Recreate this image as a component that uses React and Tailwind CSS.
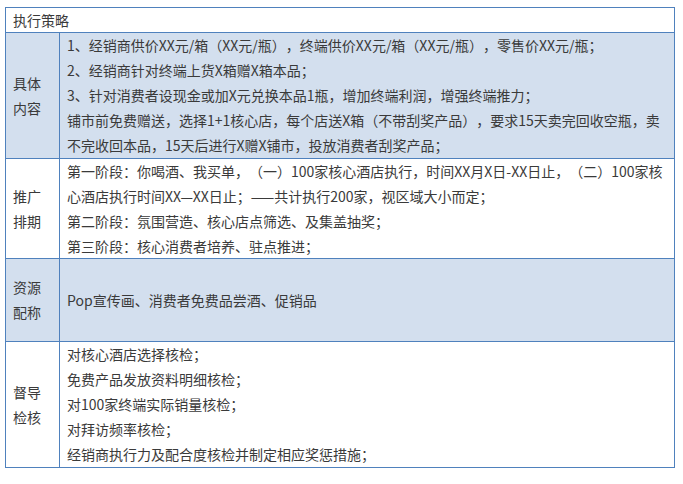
import React from 'react';

const rows = [
  {
    label: ['具体', '内容'],
    fill: true,
    h: 'h-[126px]',
    lines: [
      '1、经销商供价XX元/箱（XX元/瓶），终端供价XX元/箱（XX元/瓶），零售价XX元/瓶；',
      '2、经销商针对终端上货X箱赠X箱本品；',
      '3、针对消费者设现金或加X元兑换本品1瓶，增加终端利润，增强终端推力；',
      '铺市前免费赠送，选择1+1核心店，每个店送X箱（不带刮奖产品），要求15天卖完回收空瓶，卖',
      '不完收回本品，15天后进行X赠X铺市，投放消费者刮奖产品；',
    ],
  },
  {
    label: ['推广', '排期'],
    fill: false,
    h: 'h-[100px]',
    lines: [
      '第一阶段：你喝酒、我买单，（一）100家核心酒店执行，时间XX月X日-XX日止，（二）100家核',
      '心酒店执行时间XX—XX日止；——共计执行200家，视区域大小而定；',
      '第二阶段：氛围营造、核心店点筛选、及集盖抽奖；',
      '第三阶段：核心消费者培养、驻点推进；',
    ],
  },
  {
    label: ['资源', '配称'],
    fill: true,
    h: 'h-[83px]',
    lines: ['Pop宣传画、消费者免费品尝酒、促销品'],
  },
  {
    label: ['督导', '检核'],
    fill: false,
    h: 'h-[125px]',
    lines: [
      '对核心酒店选择核检；',
      '免费产品发放资料明细核检；',
      '对100家终端实际销量核检；',
      '对拜访频率核检；',
      '经销商执行力及配合度核检并制定相应奖惩措施；',
    ],
  },
];

export default function App() {
  return (
    <div
      className="w-[683px] h-[484px] bg-white pt-[7px] pl-[5px] text-[14px] leading-[25px] text-[#3a3a3a] [text-spacing-trim:space-all]"
      style={{ fontFamily: '"Microsoft YaHei", "Noto Sans CJK SC", sans-serif' }}
    >
      <div className="w-[670px] border border-[#4f81bd]">
        {/* 表头 */}
        <div className="h-[25px] border-b border-[#4f81bd] px-[7px] flex items-center">
          执行策略
        </div>

        {rows.map((row, i) => (
          <div
            key={i}
            className={`flex ${row.h} ${i < rows.length - 1 ? 'border-b border-[#4f81bd]' : ''} ${row.fill ? 'bg-[#d3dfee]' : 'bg-white'}`}
          >
            <div className="w-[54px] shrink-0 border-r border-[#4f81bd] pl-[7px] flex flex-col justify-center">
              {row.label.map((t) => (
                <div key={t}>{t}</div>
              ))}
            </div>
            <div className="flex-1 pl-[7px] flex flex-col justify-center">
              {row.lines.map((t, j) => (
                <div key={j} className="whitespace-nowrap">
                  {t}
                </div>
              ))}
            </div>
          </div>
        ))}
      </div>
    </div>
  );
}
